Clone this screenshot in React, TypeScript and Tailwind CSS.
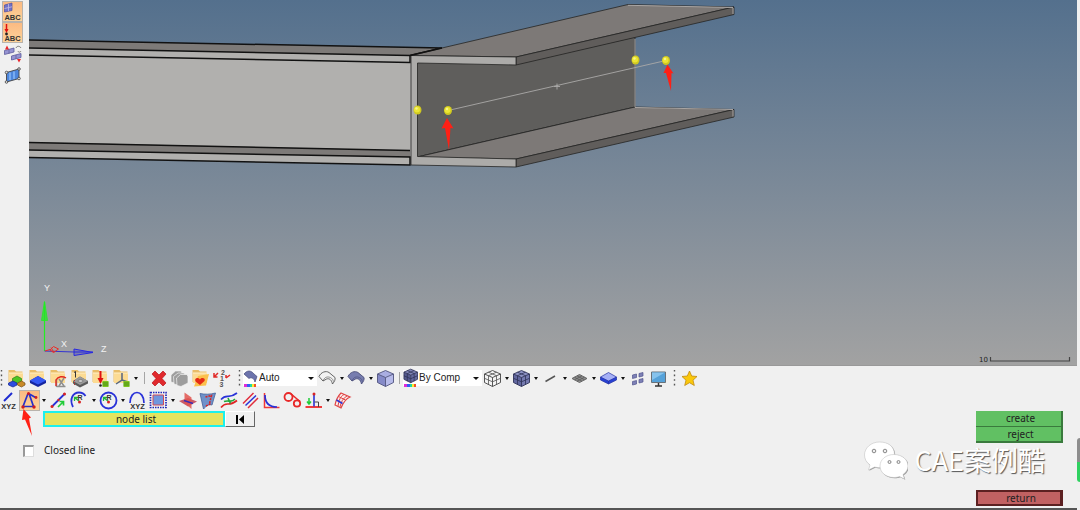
import React from 'react';

interface IconProps {
  children: React.ReactNode;
}

const Icon: React.FC<IconProps> = ({ children }) => (
  <svg viewBox="0 0 21 21" className="block w-[21px] h-[21px] shrink-0" fill="none" aria-hidden="true">
    {children}
  </svg>
);

const ToolButton: React.FC<{ label: string; active?: boolean; children: React.ReactNode }> = ({ label, active, children }) => (
  <button
    type="button"
    aria-label={label}
    className={
      active
        ? 'w-[21px] h-[21px] shrink-0 bg-linear-to-b from-[#fbb981] to-[#fdd39b] outline outline-1 -outline-offset-1 outline-[#b9b3ac]'
        : 'w-[21px] h-[21px] shrink-0'
    }
  >
    <Icon>{children}</Icon>
  </button>
);

const Caret: React.FC<{ label: string }> = ({ label }) => (
  <button type="button" aria-label={label} className="w-2 h-[21px] shrink-0 flex items-center justify-center">
    <svg viewBox="0 0 4 3" className="w-1 h-[3px]" aria-hidden="true"><path d="M0 0h4L2 3z" fill="#111" /></svg>
  </button>
);

const Grip = () => (
  <svg viewBox="0 0 3 17" className="w-[3px] h-[17px] shrink-0" aria-hidden="true">
    <path d="M1.5 0v17" stroke="#555" strokeWidth="1.4" strokeDasharray="1.6 3" />
  </svg>
);

const Divider = () => <div className="w-px h-3 bg-[#a5a5a5]" />;

// Yellow folder shared by the collector icons
const Folder = () => (
  <>
    <path d="M2.5 3.5V2h6l1.500 1.5h6.500V14H2.500z" fill="#e9bd68" />
    <path d="M3 5h14v10H3z" fill="#fcdb93" />
    <path d="M3 5h14" stroke="#fff0c8" />
  </>
);

const Slab: React.FC<{ top: string; side: string; edge: string }> = ({ top, side, edge }) => (
  <>
    <path d="M2.500 10.500v3l8 4 8-4v-3z" fill={side} />
    <path d="M2.500 10.500l8-4.500 8 4.500-8 4z" fill={top} />
    <path d="M2.500 10.500l8-4.500 8 4.500-8 4zM2.500 10.500v3l8 4 8-4v-3M10.500 14.500v3" stroke={edge} strokeWidth="0.7" />
  </>
);

const Cube: React.FC<{ light: string; mid: string; dark: string; edge: string }> = ({ light, mid, dark, edge }) => (
  <>
    <path d="M2.500 6l8-3.500 8 3.500-8 3.500z" fill={light} />
    <path d="M2.500 6l8 3.500v9l-8-4z" fill={mid} />
    <path d="M18.500 6l-8 3.500v9l8-4z" fill={dark} />
    <path d="M2.500 6l8-3.500 8 3.500v8.500l-8 4-8-4zM2.500 6l8 3.500 8-3.500M10.500 9.500v9" stroke={edge} strokeWidth="0.9" />
  </>
);

const CubeGrid: React.FC<{ color: string }> = ({ color }) => (
  <path
    d="M6.5 4.200l8 3.500v9M14.500 4.200l-8 3.500v9M2.500 10.300l8 3.500 8-3.500"
    stroke={color}
    strokeWidth="0.8"
  />
);

const CurvedPatch: React.FC<{ fill: string; stroke: string }> = ({ fill, stroke }) => (
  <>
    <path d="M2 8.500C4 4 9 2.500 12 4.500l6 5c.500 2-.500 4-2.500 6.500-1-4-3-6-6-5L6 13z" fill={fill} stroke={stroke} strokeWidth="0.9" />
    <path d="M6 13c1-3 3-4.500 6-4 2 .5 4 2 4.500 4.500" stroke={stroke} strokeWidth="0.6" />
  </>
);

const Rainbow = () => (
  <>
    <path d="M4 17.500h3" stroke="#e02bd8" strokeWidth="3" />
    <path d="M7 17.500h3" stroke="#2f63f2" strokeWidth="3" />
    <path d="M10 17.500h2" stroke="#24d9a0" strokeWidth="3" />
    <path d="M12 17.500h2" stroke="#ffe92e" strokeWidth="3" />
    <path d="M14 17.500h2" stroke="#f0522a" strokeWidth="3" />
  </>
);

const GreenTag = () => (
  <>
    <path d="M12.500 13h6v6h-6z" fill="#7fc61f" />
    <path d="M12.500 15h6M12.500 17h6" stroke="#3f7d12" strokeWidth="0.8" />
  </>
);

const RadiusMark = () => (
  <>
    <path d="M10 11L6 8M5.500 11V7.500H9" stroke="#20b838" strokeWidth="1.3" />
    <circle cx="10.500" cy="12" r="1.500" fill="#d82424" />
    <text x="8.500" y="9.500" fontSize="7" fontWeight="700" fontFamily="Liberation Sans, sans-serif" fill="#333">R</text>
  </>
);

const SmallText: React.FC<{ y: number; children: string }> = ({ y, children }) => (
  <text x="10.5" y={y} textAnchor="middle" fontFamily="Liberation Sans, sans-serif" fontSize="7.500" fontWeight="700" fill="#333">
    {children}
  </text>
);

const Combo: React.FC<{ label: string; value: string; wide?: boolean; children: React.ReactNode }> = ({ label, value, wide, children }) => (
  <div className={wide ? 'w-[79px] h-4 bg-white flex items-center' : 'w-[74px] h-4 bg-white flex items-center'}>
    <svg viewBox="3 0 15 20" className="w-[15px] h-5 shrink-0" fill="none" aria-hidden="true">{children}</svg>
    <select
      aria-label={label}
      className="appearance-none flex-1 min-w-0 h-4 pl-px bg-transparent text-[10px] leading-4 text-[#222] font-['Liberation_Sans_Narrow','Liberation_Sans',sans-serif]"
    >
      <option>{value}</option>
    </select>
    <svg viewBox="0 0 6 3" className="w-[6px] h-[3px] mr-[3px] shrink-0 pointer-events-none" aria-hidden="true">
      <path d="M0 0h6L3 3z" fill="#111" />
    </svg>
  </div>
);

const SideBar = () => (
  <div className="w-[29px] shrink-0 pl-[2px] pt-px flex flex-col bg-[#f0f0f0]">
    <ToolButton label="Element labels" active>
      <path d="M2.500 4l7.500-2v7.500L2.500 11z" fill="#6f71c9" stroke="#55529c" strokeWidth="0.7" />
      <path d="M6.500 3v7M2.500 7.500L10 5.800" stroke="#c9bce0" strokeWidth="0.8" />
      <SmallText y={19}>ABC</SmallText>
    </ToolButton>
    <ToolButton label="Load labels" active>
      <path d="M4.500 2v7" stroke="#e01010" strokeWidth="1.500" />
      <path d="M2.500 7h4l-2 4z" fill="#e01010" />
      <circle cx="4.500" cy="12" r="1.400" fill="#222" />
      <SmallText y={19}>ABC</SmallText>
    </ToolButton>
    <ToolButton label="Swap elements">
      <path d="M2.500 7.500L12 5v4l-9.500 2.500zM9.500 13L19 10.500v4L9.500 17z" fill="#9694d2" stroke="#5c5a9c" strokeWidth="0.8" />
      <path d="M7 6.500v4M14 12v4" stroke="#5c5a9c" strokeWidth="0.7" />
      <path d="M3 6.500h4L5 2.500zM15 16h4l-2 3.500z" fill="#e8262b" />
      <path d="M14 5c1-2.500 4-2 5 0M19 8c-1 2-3 1-3 0" stroke="#777" />
    </ToolButton>
    <ToolButton label="Surface points">
      <path d="M4.500 8.500L17 5v9.500L4.500 18z" fill="#4d86dc" stroke="#444" strokeWidth="0.9" />
      <path d="M8 8.500v7.500M12 7.500v7.500" stroke="#78acf0" strokeWidth="2" />
      <g fill="#ddd" stroke="#444" strokeWidth="0.8">
        <circle cx="4.500" cy="8.500" r="1.300" /><circle cx="17" cy="5" r="1.300" /><circle cx="17" cy="14.500" r="1.300" /><circle cx="4.500" cy="18" r="1.300" />
      </g>
    </ToolButton>
  </div>
);

const Node: React.FC<{ cx: number; cy: number }> = ({ cx, cy }) => (
  <>
    <ellipse cx={cx} cy={cy} rx="4" ry="4.500" fill="#cfc820" />
    <circle cx={cx - 0.5} cy={cy - 0.5} r="3" fill="#ebe534" />
    <circle cx={cx - 1} cy={cy - 1.5} r="1.200" fill="#f8f588" />
  </>
);

const Viewport = () => (
  <div className="relative flex-1 min-w-0 overflow-hidden bg-linear-to-b from-[#54708d] to-[#a2a2a2] border-b border-[#999]">
    <svg viewBox="29 0 1048 365" preserveAspectRatio="xMinYMin slice" fill="none" className="absolute inset-0 w-full h-full" role="img" aria-label="Beam model">
      {/* Long beam */}
      <path d="M29 40L442 48 411 56 29 48z" fill="#7d7a78" />
      <path d="M29 48L411 55.500V165L29 157.500z" fill="#b1b0ae" />
      <path d="M29 142L410 150.500V157L29 150z" fill="#7d7a78" />
      <g stroke="#111" strokeWidth="1.500">
        <path d="M29 40L442 48 410 55.500 29 48M29 55L410 62.500V55.500" />
        <path d="M29 142.500L410 150.500M29 150L410 157V165L29 157.500" />
      </g>

      {/* C-section */}
      <g stroke="#252423" strokeWidth="0.8" strokeLinejoin="round">
        <path d="M417 62L516 64 635 37V107L417 157z" fill="#5f5e5c" />
        <path d="M417 157L635 107 734 109.500 516 159z" fill="#7d7977" />
        <path d="M516 159L734 109.500V117L516 167z" fill="#605d5b" />
        <path d="M411 55.500L442 48 628 4.500 734 7 516 57z" fill="#7d7977" />
        <path d="M516 57L734 7V14.500L516 65z" fill="#605d5b" />
        <path d="M411 55.500L516 57V65L417.500 63V156.500L516 159V167L411 165z" fill="#acaba9" />
      </g>
      <path d="M628 5.300L733 7.500M635 107.500L733 109.500M635 39V107M733 8V14M733 110V116.500" stroke="#a9a5a3" />
      <path d="M410 55.500L442 48" stroke="#111" strokeWidth="1.500" />

      {/* Node pairs and line preview */}
      <path d="M448 110.500L666 60.500M557 83.500v6M554 86.500h6" stroke="#aaa9a8" strokeWidth="0.9" />
      <Node cx={417.5} cy={110} />
      <Node cx={448} cy={110.5} />
      <Node cx={635.5} cy={60} />
      <Node cx={666} cy={60.5} />
      <path d="M447 118L453.500 128.500 450.500 128 449 150 445 128 441.500 128.500z" fill="#ff2015" />
      <path d="M667.500 64.500L673.500 73.500 671.500 73 671 91 666 73 663.500 73z" fill="#ff2015" />

      {/* Axis triad */}
      <path d="M44.500 351V302" stroke="#22ee22" strokeWidth="1.200" />
      <path d="M41.500 320.500L44.500 301.500 47.500 320.500z" fill="#22e822" fillOpacity="0.700" stroke="#22ee22" strokeWidth="0.8" />
      <path d="M44.500 351L74 352" stroke="#3535d0" strokeWidth="1.200" />
      <path d="M74 349L93 352.500 74 355.500zM74 352h19" fill="#5555c0" fillOpacity="0.5" stroke="#2828e0" />
      <path d="M45 351l5-1.500M50 350l3.500-3.500 5 2.500-5 3.500zM51 347.500l3 5" stroke="#ee2c25" />
      <g fill="#f2f2f2" fontFamily="Liberation Sans, sans-serif" fontSize="9">
        <text x="44" y="291">Y</text>
        <text x="61" y="347">X</text>
        <text x="101" y="352">Z</text>
      </g>

      <text x="979" y="362" fontFamily="DejaVu Sans, sans-serif" fontSize="7" fill="#222">10</text>
      <path d="M990.500 357v4h79v-4" stroke="#444" strokeWidth="1.200" />
    </svg>
  </div>
);

const MainToolbar = () => (
  <div className="flex items-center h-[22px] w-full">
    <div className="w-[6px] flex shrink-0"><Grip /></div>
    <ToolButton label="Assemblies">
      <Folder />
      <path d="M6.500 10.500l4.500-2.500 4.500 2.500v3L11 16l-4.500-2.500z" fill="#4fc522" stroke="#28801a" strokeWidth="0.7" />
      <path d="M2.500 15l4.500-2 4 2v2l-4 2-4.500-2z" fill="#2d4ce0" stroke="#14268e" strokeWidth="0.7" />
      <path d="M11.500 15l4-2 3.500 2v2l-3.500 2-4-2z" fill="#c98a26" stroke="#77501a" strokeWidth="0.7" />
    </ToolButton>
    <ToolButton label="Components">
      <Folder />
      <path d="M3 12.500L11 8l8 4.500V15l-8 4-8-4z" fill="#1525a0" />
      <path d="M3 12.500L11 8l8 4.500-8 4z" fill="#3558f4" />
    </ToolButton>
    <ToolButton label="Properties">
      <Folder />
      <path d="M8.500 19v-8M8.500 18.500h9M11 18l5-8M11 11l5 7" stroke="#8e8e8e" strokeWidth="1.500" />
      <path d="M8 18v-6c2-4 7-4 10-2" stroke="#e2281e" strokeWidth="1.400" />
    </ToolButton>
    <ToolButton label="Materials">
      <Folder />
      <path d="M4 13l7-4.500 8 4.500v2.500l-8 4-7-4z" fill="#5a5a5a" />
      <path d="M4 13l7-4.500 8 4.500-8 4z" fill="#9b9b9b" />
      <ellipse cx="11.500" cy="13" rx="2.500" ry="1.500" fill="#c8c8c8" stroke="#666" strokeWidth="0.6" />
      <path d="M5 4.500L6.500 3.500v6" stroke="#333" />
      <path d="M5.500 12v5" stroke="#b33" strokeDasharray="1 1" />
    </ToolButton>
    <ToolButton label="Load collectors">
      <Folder />
      <path d="M10.500 3v8" stroke="#e01212" strokeWidth="2" />
      <path d="M7.500 10h6l-3 6z" fill="#e01212" />
      <circle cx="10.500" cy="17.500" r="1.300" fill="#222" />
      <GreenTag />
    </ToolButton>
    <ToolButton label="System collectors">
      <Folder />
      <path d="M11 5v7l-6 4M11 12l6 2" stroke="#566681" strokeWidth="1.500" />
      <GreenTag />
    </ToolButton>
    <Caret label="More collectors" />
    <div className="w-2 flex shrink-0 justify-center"><Divider /></div>
    <ToolButton label="Delete">
      <path d="M4 6l3-3 4 4 4-4 3 3-4 4.500 4 4.500-3 3-4-4-4 4-3-3 4-4.500z" fill="#e0292d" stroke="#b9171c" strokeWidth="0.7" />
    </ToolButton>
    <ToolButton label="Card edit">
      <g fill="#9d9d9d" stroke="#f4f4f4" strokeWidth="0.7">
        <path d="M2 7l4.500-4H12l1 2v7l-7 3-4-1z" />
        <path d="M4.500 8.500L9 5h6l1 2v7l-7 3-4-1z" />
        <path d="M7.500 10l4-3.500H18l1 2v6.500l-7 3.500-4-1z" />
      </g>
    </ToolButton>
    <ToolButton label="Favorite collectors">
      <Folder />
      <path d="M8 8l11-2-3 11.500-12 1z" fill="#fbc04c" />
      <path d="M10 17l-4.500-3.500c-1.500-3 2-5 4.500-2 1.500-2.500 6-1.500 4.500 1.500z" fill="#e52a16" />
    </ToolButton>
    <ToolButton label="Renumber">
      <g fontFamily="Liberation Sans, sans-serif" fontSize="7" fontWeight="700" fill="#555">
        <text x="10" y="7">2</text><text x="9" y="13">1</text><text x="8.5" y="19">3</text>
      </g>
      <path d="M3 9l4-4M3 5v4h3.500M15 10l4-3M15 7v3" stroke="#e12a28" strokeWidth="1.500" />
    </ToolButton>
    <div className="w-[11px] flex shrink-0 justify-center pl-1"><Grip /></div>
    <Combo label="Geometry color mode" value="Auto">
      <path d="M4 6c3-4 7-4 10 0l3 2.500-2 5.500c-1-4-4-5-6-3.500z" fill="#6d74ad" stroke="#454a7a" strokeWidth="0.7" />
      <Rainbow />
    </Combo>
    <ToolButton label="Wireframe geometry"><CurvedPatch fill="#f2f2f2" stroke="#555" /></ToolButton>
    <Caret label="Wireframe geometry options" />
    <ToolButton label="Shaded geometry"><CurvedPatch fill="#777daf" stroke="#494d78" /></ToolButton>
    <Caret label="Shaded geometry options" />
    <ToolButton label="Transparency">
      <Cube light="#aaaee2" mid="#858ac8" dark="#b7bbea" edge="#50547e" />
    </ToolButton>
    <div className="w-[7px] flex shrink-0 justify-center"><Divider /></div>
    <Combo label="Element color mode" value="By Comp" wide>
      <g transform="translate(1.800 -1) scale(0.850)">
        <Cube light="#8186b8" mid="#555a8e" dark="#666ba0" edge="#2a2d50" />
        <CubeGrid color="#2a2d50" />
      </g>
      <Rainbow />
    </Combo>
    <ToolButton label="Wireframe elements">
      <Cube light="#f4f4f4" mid="#f4f4f4" dark="#f4f4f4" edge="#444" />
      <CubeGrid color="#555" />
    </ToolButton>
    <Caret label="Wireframe element options" />
    <ToolButton label="Shaded elements">
      <Cube light="#8d92c4" mid="#62679f" dark="#757ab0" edge="#2f3258" />
      <CubeGrid color="#2f3258" />
    </ToolButton>
    <Caret label="Shaded element options" />
    <ToolButton label="1D elements"><path d="M5.500 13.500L15 8" stroke="#555" strokeWidth="1.500" /></ToolButton>
    <Caret label="1D element options" />
    <ToolButton label="2D elements">
      <path d="M3 10.500L10.500 6.500 18 10.500l-7.500 4z" fill="#8f8f8f" stroke="#666" />
      <path d="M5.500 9.200l7.500 4M8 7.800l7.500 4M13 7.800l-7.500 4M15.500 9.200l-7.500 4" stroke="#555" strokeWidth="0.7" />
    </ToolButton>
    <Caret label="2D element options" />
    <ToolButton label="Shell thickness">
      <g transform="translate(0 -1.500)"><Slab top="#a6b0f6" side="#2740d4" edge="#2430a0" /></g>
    </ToolButton>
    <Caret label="Shell thickness options" />
    <ToolButton label="Shrink elements">
      <g fill="#7d80b6" stroke="#50538c" strokeWidth="0.7">
        <path d="M5.500 7l4-1v3.500l-4 1zM12 5.500l4-1V8l-4 1zM5.500 13.500l4-1V16l-4 1zM12 11.500l4-1V14l-4 1z" />
      </g>
    </ToolButton>
    <ToolButton label="Display options">
      <path d="M3.500 4h14v10.500h-14z" fill="#56a2d9" stroke="#69727a" />
      <path d="M4 4.500h13L4 12z" fill="#86c3ed" />
      <path d="M10.500 15v3M7 18h7" stroke="#333" strokeWidth="1.500" />
    </ToolButton>
    <div className="w-[10px] flex shrink-0 justify-center"><Grip /></div>
    <ToolButton label="Favorites">
      <path d="M10.500 3l2.200 5 5.300.5-4 3.700 1.300 5.300-4.800-2.800-4.800 2.800L7 12.200 3 8.500l5.300-.5z" fill="#fac80c" stroke="#c28a10" strokeWidth="0.8" />
    </ToolButton>
  </div>
);

const LineToolbar = () => (
  <div className="flex items-center h-[21px] mt-px w-full">
    <button type="button" aria-label="Line by XYZ" className="w-[19px] h-[21px] shrink-0 overflow-hidden">
      <svg viewBox="2 0 19 21" className="w-[19px] h-[21px]" fill="none" aria-hidden="true">
        <path d="M6 11l8-8" stroke="#1d2ad0" strokeWidth="2" />
        <SmallText y={18.5}>XYZ</SmallText>
      </svg>
    </button>
    <ToolButton label="Linear nodes" active>
      <path d="M4 16.500L9 3.500M10 3.500L14.500 16.500H4M9.500 3.500l7 4" stroke="#2430cc" strokeWidth="1.700" />
      <g fill="#cf1d1d"><circle cx="9.500" cy="3.500" r="1.500" /><circle cx="17" cy="7.500" r="1.400" /><circle cx="4" cy="17" r="1.700" /><circle cx="15" cy="17" r="1.700" /></g>
    </ToolButton>
    <Caret label="Linear node options" />
    <ToolButton label="Line along vector">
      <path d="M4 16.500L17 3.500" stroke="#2932d8" strokeWidth="1.800" />
      <path d="M10 17l5-5M11.500 11.500h4v4" stroke="#20cc38" strokeWidth="1.700" />
      <g fill="#d82424"><circle cx="4" cy="16.500" r="1.500" /><circle cx="10.500" cy="10" r="1.200" /><circle cx="16.500" cy="4" r="1.500" /></g>
    </ToolButton>
    <ToolButton label="Arc">
      <path d="M4 17C0 9 4 2.500 10 2.500c3 0 5 1 6.500 3.500" stroke="#2932d8" strokeWidth="1.800" />
      <RadiusMark />
    </ToolButton>
    <Caret label="Arc options" />
    <ToolButton label="Circle">
      <circle cx="10.500" cy="10.500" r="8" stroke="#2932d8" strokeWidth="1.800" />
      <RadiusMark />
    </ToolButton>
    <Caret label="Circle options" />
    <ToolButton label="Conic by XYZ">
      <path d="M3 13c0-7 3.500-10.500 7-10.500S17 6 17 13" stroke="#2932d8" strokeWidth="1.700" />
      <SmallText y={18.5}>XYZ</SmallText>
    </ToolButton>
    <ToolButton label="Extract edge">
      <path d="M2.500 2.500h15.500v15H2.500z" stroke="#2028b8" strokeWidth="1.700" strokeDasharray="1.500 1" />
      <path d="M5 5h10.500v10H5z" fill="#6f96de" stroke="#d04a58" />
    </ToolButton>
    <Caret label="Extract edge options" />
    <ToolButton label="Intersect">
      <path d="M2 11l9-3 9 3.500-9 5z" fill="#c95a68" />
      <path d="M7.500 2.500l7 5V19l-7-6z" fill="#e2554f" fillOpacity="0.850" />
      <path d="M7 10.500l9 3" stroke="#3a2cb4" strokeWidth="1.500" />
    </ToolButton>
    <ToolButton label="Line on surface">
      <path d="M2 3.500c5 1 10 1 15.500-.5L14 15c-3-1-6 1-8.500 4z" fill="#6f91ca" stroke="#44629a" strokeWidth="0.8" />
      <path d="M8 16l5-2.500M7.500 7l6-1.500-2 8" stroke="#d82424" strokeWidth="1.500" strokeDasharray="2 1" />
    </ToolButton>
    <ToolButton label="Midline">
      <path d="M2 9.500C8 3 9 10 18 3" stroke="#2932d8" strokeWidth="1.700" />
      <path d="M2 17.500C8 10 9 18 18 10.500" stroke="#e02424" strokeWidth="1.700" />
      <path d="M5 11.500c5-2 7 2 11-2.500M9 8l2.500 5.500" stroke="#22a83c" strokeWidth="1.600" />
    </ToolButton>
    <ToolButton label="Offset">
      <path d="M3 13.500L13.500 3M8 18L18 8" stroke="#e02c3c" strokeWidth="1.500" />
      <path d="M5.500 15.500L16 5.500" stroke="#2932d8" strokeWidth="1.500" />
    </ToolButton>
    <ToolButton label="Fillet">
      <path d="M3.500 3v14.500h15" stroke="#f03838" strokeWidth="1.500" />
      <path d="M4 5c0 8 4 12 12 12" stroke="#2932d8" strokeWidth="1.700" />
    </ToolButton>
    <ToolButton label="Tangent">
      <circle cx="6.500" cy="7" r="4" stroke="#e82828" strokeWidth="1.800" />
      <circle cx="15" cy="13.500" r="3.200" stroke="#e82828" strokeWidth="1.800" />
      <path d="M8.500 3.500L18 11.500" stroke="#e82828" strokeWidth="1.500" />
    </ToolButton>
    <ToolButton label="Normal to geometry">
      <path d="M2.500 17H19" stroke="#f02828" strokeWidth="1.800" />
      <path d="M11 4v12.500" stroke="#2932d8" strokeWidth="1.600" />
      <path d="M11.500 12h4v5" stroke="#444" />
      <path d="M6 8v5M4 11.500l2 2.500 2-2.500" stroke="#20cc38" strokeWidth="1.500" />
      <circle cx="11" cy="4" r="1.500" fill="#d82424" />
    </ToolButton>
    <Caret label="Normal options" />
    <ToolButton label="Feature lines">
      <path d="M9 3l9 4c-5 2-7 6-9 11l-6-3c1-5 3-9 6-12z" fill="#fbeaea" stroke="#e04444" strokeWidth="1.200" />
      <path d="M6.500 6.500l7 3.500M12 4.500c-4 2-5 6-6 11.500M15 6c-4 2-6 6-7 11" stroke="#e04444" />
      <path d="M4.500 10l6 3.500" stroke="#2932d8" strokeWidth="1.500" />
    </ToolButton>
  </div>
);

const LinePanel = () => (
  <div className="relative flex justify-between h-[97px] text-[10px] text-[#222] font-['Noto_Sans',sans-serif]">
    <div className="flex flex-col">
      <div className="flex pl-[43px] h-4">
        <button type="button" className="w-[182px] h-4 pl-1 bg-[#e5e45f] border-2 border-[#1cf0ee] leading-3">node list</button>
        <button type="button" aria-label="Reset node list" className="w-[30px] h-4 border border-t-white border-l-white border-r-[#666] border-b-[#666] flex items-center justify-center">
          <svg viewBox="0 0 9 9" className="w-[9px] h-[9px]" aria-hidden="true"><path d="M0 0h2v9H0zM8 0v9L3 4.500z" fill="#000" /></svg>
        </button>
      </div>
      <label className="flex items-center gap-[10px] pl-[23px] mt-[15px] h-4">
        <input type="checkbox" className="appearance-none w-[11px] h-3 mt-px bg-white border border-t-2 border-l-2 border-t-[#999] border-l-[#999] border-r-[#ddd] border-b-[#ddd] checked:bg-[#555]" />
        Closed line
      </label>
    </div>

    <div className="flex flex-col w-[87px] mr-[17px]">
      <button type="button" className="h-4 pl-1 bg-[#61c063] border-r-2 border-b border-[#3a7a3d] leading-[15px]">create</button>
      <button type="button" className="h-4 pl-1 bg-[#61c063] border-r-2 border-b-2 border-[#3a7a3d] leading-[14px]">reject</button>
      <button type="button" className="h-4 pl-1 mt-auto mb-[2px] bg-[#c16162] border-2 border-r-3 border-[#5c2021] leading-3">return</button>
    </div>

    {/* Pointer to the active tool */}
    <svg viewBox="0 0 14 28" className="absolute left-[21px] -top-[2px] w-[14px] h-7 pointer-events-none" aria-hidden="true">
      <path d="M2.500 0L10 8.500l-2 1L11 27 4 10.500 1 11z" fill="#ff2015" />
    </svg>

    {/* Channel watermark */}
    <div className="absolute right-[35px] top-[29px] flex items-center gap-[6px] pointer-events-none">
      <svg viewBox="0 0 45 40" className="w-[45px] h-10" aria-hidden="true">
        <g fill="#999" transform="translate(0.8 0.8)">
          <path d="M16.500 2C8 2 1.500 8 1.500 15c0 4 2 7.500 5.500 10l-1.500 5 6-3c10 3 20-3 20-12S25 2 16.500 2z" />
          <path d="M31 14.500c-8 0-14 5-14 11.500s6 11.500 14 11.500c2 0 4-.3 5.500-1l5 2.500-1.500-4.500c3-2 5-5 5-8.500 0-6.500-6-11.500-14-11.500z" />
        </g>
        <g fill="#fff" stroke="#bbb" strokeWidth="0.5">
          <path d="M16.500 2C8 2 1.500 8 1.500 15c0 4 2 7.500 5.500 10l-1.500 5 6-3c10 3 20-3 20-12S25 2 16.500 2z" />
          <path d="M31 14.500c-8 0-14 5-14 11.500s6 11.500 14 11.500c2 0 4-.3 5.500-1l5 2.500-1.500-4.500c3-2 5-5 5-8.500 0-6.500-6-11.500-14-11.500z" />
        </g>
        <g fill="#eee" stroke="#888"><circle cx="11" cy="11" r="1.800" /><circle cx="22" cy="11" r="1.800" /><circle cx="26.500" cy="22" r="1.500" /><circle cx="35.500" cy="22" r="1.500" /></g>
      </svg>
      <span className="text-[27px] leading-8 text-white [text-shadow:1px_1px_1px_#555] font-['Noto_Sans_CJK_SC',sans-serif]">CAE案例酷</span>
    </div>

    {/* Scroll progress */}
    <div className="absolute right-0 top-[27px] w-[3px] h-11 rounded-l-sm overflow-hidden flex flex-col">
      <div className="flex-1 bg-[#8d8d8d]" />
      <div className="h-5 bg-[#2fd160]" />
    </div>
  </div>
);

const App: React.FC = () => (
  <div className="flex flex-col h-screen bg-[#f0f0f0] overflow-hidden">
    <div className="flex flex-1 min-h-0 pr-[3px]">
      <SideBar />
      <Viewport />
    </div>
    <div className="pt-px flex flex-col shrink-0">
      <MainToolbar />
      <LineToolbar />
      <LinePanel />
    </div>
    <div className="h-[2px] shrink-0 bg-[#555] mr-[3px]" />
  </div>
);

export default App;
